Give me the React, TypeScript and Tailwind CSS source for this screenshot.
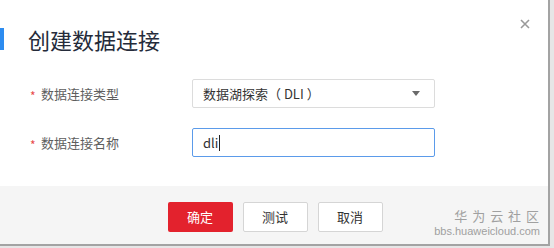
import React from "react";

const cjk = { fontFamily: '"Noto Sans CJK SC", "Liberation Sans", sans-serif' };

function FieldRow(props: { label: string; children: React.ReactNode }) {
    return (
        <div className='flex items-center h-[29px]'>
            <div className='w-[192px] flex items-center pl-[30px] text-[13px] text-[#5e5e5e]'>
                <span className='text-[#e84a4a] text-[12px] leading-[13px] w-[11px] pt-[3px]'>*</span>
                <span>{props.label}</span>
            </div>
            {props.children}
        </div>
    )
}

export default function App() {
    return (
        <div className='w-[554px] h-[248px] bg-[#e6e6e6] flex' style={cjk}>
            <div className='relative w-[550px] h-[246px] bg-white flex flex-col border-r-2 border-b-2 border-[#a3a3a3]'>

                {/* закрыть */}
                <svg className='absolute left-[520px] top-[19px]' width="10" height="10" viewBox="0 0 10 10">
                    <path d="M1 1 L9 9 M9 1 L1 9" stroke="#9a9a9a" strokeWidth="1.6" />
                </svg>

                <div className='flex items-center mt-[28px] h-[22px]'>
                    <div className='w-[4px] h-[22px] bg-[#2d8cf0]'></div>
                    <h1 className='ml-[24px] text-[22px] leading-[22px] text-[#252b3a]'>创建数据连接</h1>
                </div>

                <div className='flex flex-col gap-[20px] mt-[29px]'>
                    <FieldRow label='数据连接类型'>
                        <div className='w-[243px] h-[29px] border border-[#dcdcdc] rounded-[2px] flex items-center justify-between pl-[10px] pr-[14px] text-[13px] text-[#333]'>
                            <span>数据湖探索（ DLI ）</span>
                            <svg width="8" height="5" viewBox="0 0 8 5">
                                <path d="M0 0 L8 0 L4 5 Z" fill="#6a6a6a" />
                            </svg>
                        </div>
                    </FieldRow>
                    <FieldRow label='数据连接名称'>
                        <div className='w-[243px] h-[29px] border border-[#5b9bea] rounded-[2px] flex items-center pl-[10px] text-[13px] text-[#333]'>
                            <span>dli</span>
                            <span className='w-[1px] h-[16px] bg-[#222] ml-[1px]'></span>
                        </div>
                    </FieldRow>
                </div>

                <div className='mt-[29px] flex-1 bg-[#f5f5f5] flex justify-center gap-[10px] pt-[16px] pl-[2px] relative'>
                    <button className='w-[65px] h-[30px] rounded-[2px] bg-[#e3222d] text-white text-[13px]'>确定</button>
                    <button className='w-[65px] h-[30px] rounded-[2px] bg-white border border-[#d5d5d5] text-[#333] text-[13px]'>测试</button>
                    <button className='w-[65px] h-[30px] rounded-[2px] bg-white border border-[#d5d5d5] text-[#333] text-[13px]'>取消</button>

                    <div className='absolute right-[8px] bottom-[6px] flex flex-col items-end text-[#a0a0a0]'>
                        <span className='text-[13px] leading-[16px] tracking-[1px]'>华 为 云 社 区</span>
                        <span className='text-[11px] leading-[14px]' style={{ fontFamily: '"Liberation Sans", sans-serif' }}>bbs.huaweicloud.com</span>
                    </div>
                </div>
            </div>
        </div>
    )
}
